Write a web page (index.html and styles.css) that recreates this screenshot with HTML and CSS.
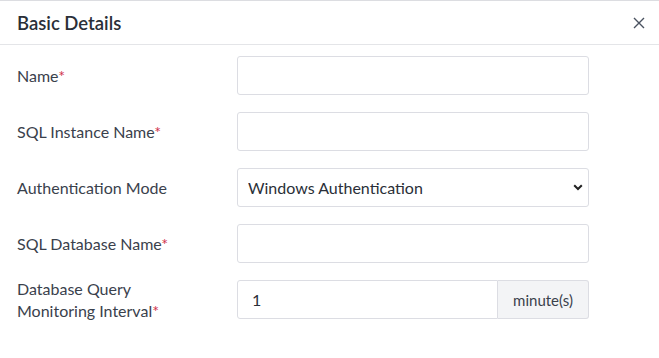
FILE: index.html
```html
<!DOCTYPE html>
<html lang="en">
<head>
    <meta charset="UTF-8">
    <meta name="viewport" content="width=device-width, initial-scale=1.0">
    <title>Basic Details</title>
    <link rel="stylesheet" href="styles.css">
</head>
<body>
    <div class="modal">
        <div class="modal-header">
            <h2>Basic Details</h2>
            <button class="close-btn" aria-label="Close">
                <svg width="12" height="12" viewBox="0 0 12 12">
                    <path d="M1 1L11 11M11 1L1 11" stroke="#4a5260" stroke-width="1.4" fill="none"/>
                </svg>
            </button>
        </div>

        <form class="modal-body">
            <div class="form-row">
                <label>Name<span class="req">*</span></label>
                <input type="text" class="field">
            </div>
            <div class="form-row">
                <label>SQL Instance Name<span class="req">*</span></label>
                <input type="text" class="field">
            </div>
            <div class="form-row">
                <label>Authentication Mode</label>
                <div class="select-wrap">
                    <select class="field">
                        <option>Windows Authentication</option>
                        <option>SQL Server Authentication</option>
                    </select>
                    <svg class="caret" width="10" height="7" viewBox="0 0 10 7">
                        <path d="M1.2 1.2L5 5L8.8 1.2" stroke="#222" stroke-width="2" fill="none"/>
                    </svg>
                </div>
            </div>
            <div class="form-row">
                <label>SQL Database Name<span class="req">*</span></label>
                <input type="text" class="field">
            </div>
            <div class="form-row">
                <label>Database Query<br>Monitoring Interval<span class="req">*</span></label>
                <div class="input-group">
                    <input type="text" class="field" value="1">
                    <span class="addon">minute(s)</span>
                </div>
            </div>
        </form>
    </div>
</body>
</html>
```

FILE: styles.css
```css
* {
    margin: 0;
    padding: 0;
    box-sizing: border-box;
    font-family: Lato, 'Noto Sans', sans-serif;
}

body {
    background-color: #ffffff;
    color: #333a45;
}

.modal {
    width: 659px;
    height: 358px;
    border-top: 1px solid #dcdde1;
}

.modal-header {
    height: 44px;
    display: flex;
    align-items: center;
    justify-content: space-between;
    padding: 0 14px 0 17px;
    border-bottom: 1px solid #e4e5e8;
}

.modal-header h2 {
    font-size: 18.5px;
    font-weight: 600;
    color: #2a2f38;
}

.close-btn {
    background: none;
    border: none;
    width: 12px;
    height: 12px;
    display: flex;
    cursor: pointer;
}

.modal-body {
    padding: 11px 0 0 17px;
    display: flex;
    flex-direction: column;
    gap: 17px;
}

.form-row {
    display: flex;
    align-items: center;
    height: 39px;
}

.form-row label {
    width: 220px;
    font-size: 16px;
    line-height: 22px;
    color: #3a414c;
}

.req {
    color: #d0334c;
}

.field {
    width: 352px;
    height: 39px;
    border: 1px solid #dcdde3;
    border-radius: 3px;
    padding: 0 10px;
    font-size: 16px;
    color: #2a2f38;
    background-color: #ffffff;
    outline: none;
}

.select-wrap {
    position: relative;
}

.select-wrap select {
    appearance: none;
    -webkit-appearance: none;
}

.caret {
    position: absolute;
    right: 6px;
    top: 16px;
    pointer-events: none;
}

.input-group {
    display: flex;
    width: 352px;
}

.input-group .field {
    width: 261px;
    border-radius: 3px 0 0 3px;
    padding-left: 14px;
}

.addon {
    flex: 1;
    height: 39px;
    display: flex;
    align-items: center;
    justify-content: center;
    background-color: #f3f4f6;
    border: 1px solid #dcdde3;
    border-left: none;
    border-radius: 0 3px 3px 0;
    font-size: 15px;
    color: #3a414c;
}
```
